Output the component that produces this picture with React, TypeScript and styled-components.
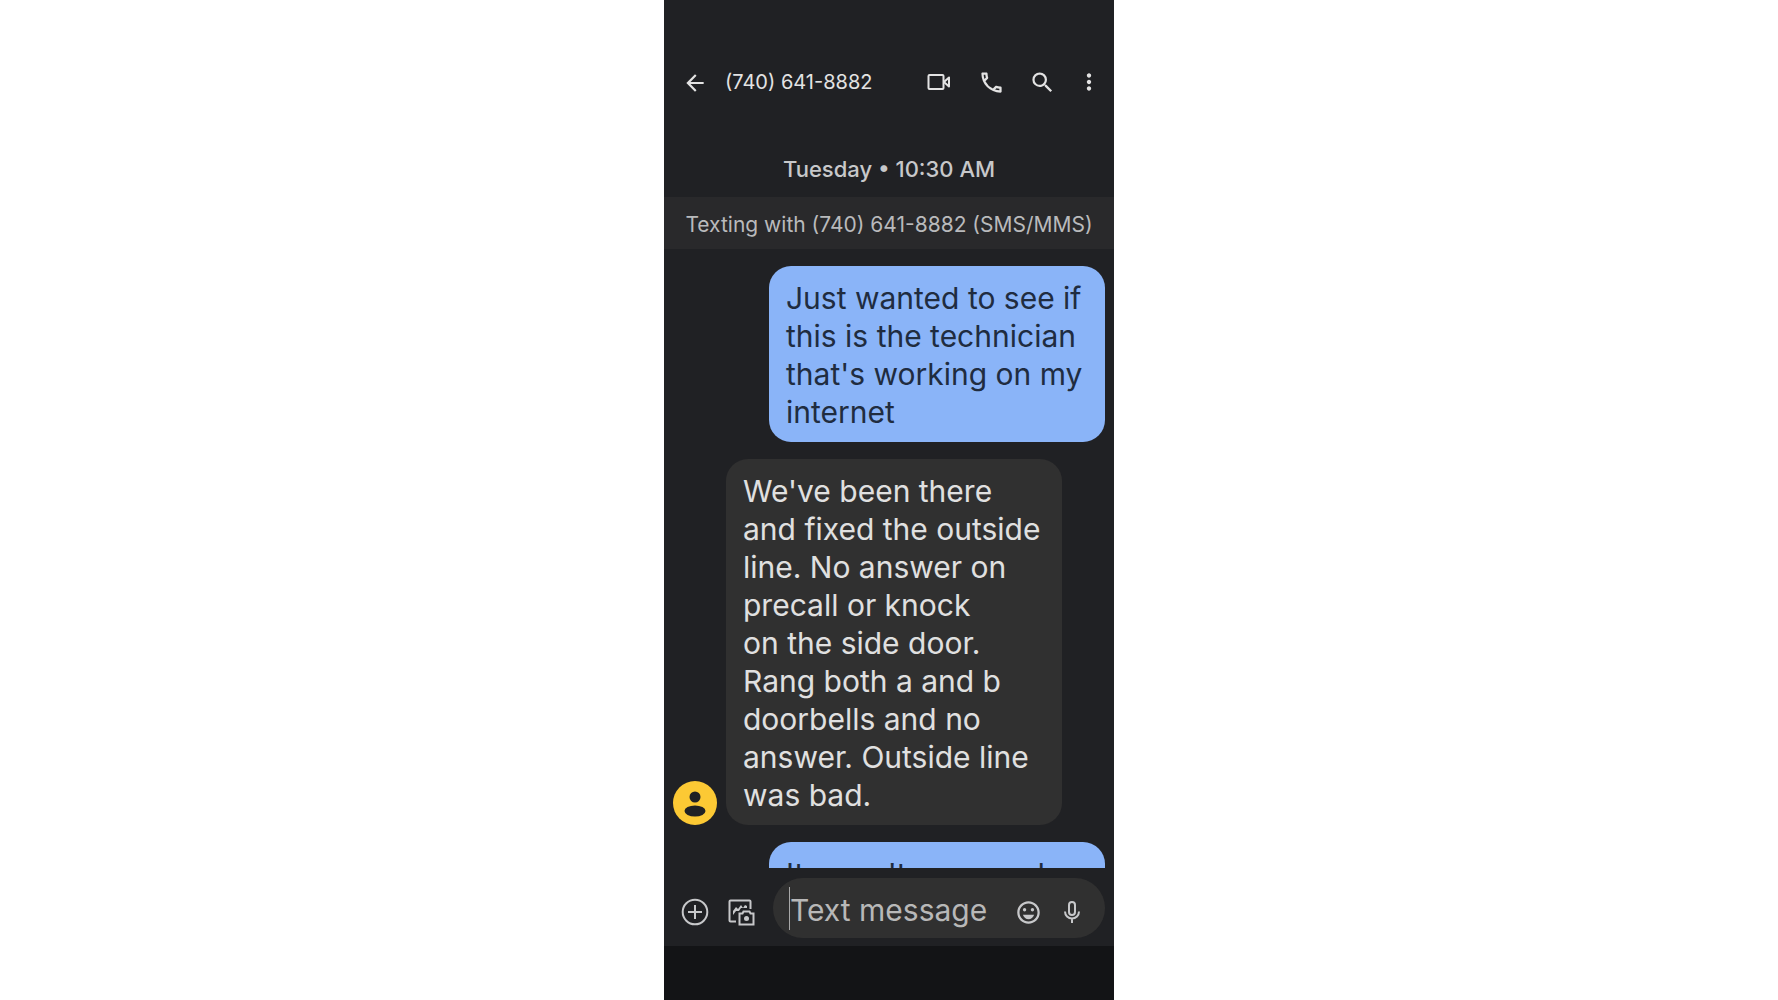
import React from "react";
import styled, { createGlobalStyle } from "styled-components";
import {
  MdArrowBack,
  MdMoreVert,
  MdOutlineCall,
  MdOutlineEmojiEmotions,
  MdSearch,
} from "react-icons/md";

const GlobalStyle = createGlobalStyle`
  * { box-sizing: border-box; }
  body {
    margin: 0;
    background: #ffffff;
    font-family: Inter, Roboto, "Liberation Sans", sans-serif;
  }
`;

const Phone = styled.main`
  display: flex;
  flex-direction: column;
  width: 100%;
  max-width: 450px;
  height: 100vh;
  margin: 0 auto;
  background: #202124;
  color: #e3e3e3;
`;

const Header = styled.header`
  display: flex;
  align-items: center;
  padding: 54px 12px 0 18px;
`;

const Title = styled.h1`
  flex: 1;
  margin: 0 0 0 19px;
  padding-top: 1px;
  font-size: 20px;
  line-height: 55px;
  font-weight: 400;
  white-space: nowrap;
`;

const IconButton = styled.button<{ $size?: number }>`
  display: grid;
  place-items: center;
  flex: none;
  width: ${({ $size = 24 }) => $size}px;
  height: ${({ $size = 24 }) => $size}px;
  padding: 0;
  border: 0;
  background: none;
  color: inherit;
  cursor: pointer;
`;

const ComposerButton = styled(IconButton)`
  height: 40px;
  padding-top: 8px;
`;

const Actions = styled.nav`
  display: flex;
  align-items: center;
  gap: 24px;

  & > :last-child {
    margin-left: -3px;
  }
`;

const DateLine = styled.time`
  padding: 43px 0 12px;
  font-size: 22px;
  line-height: 32px;
  font-weight: 500;
  text-align: center;
  color: #c7c8ca;
`;

const Banner = styled.p`
  margin: 0;
  padding-top: 3px;
  background: #29292b;
  color: #b9babc;
  font-size: 21px;
  line-height: 49px;
  text-align: center;
  white-space: nowrap;
`;

const Thread = styled.ol`
  display: flex;
  flex-direction: column;
  flex: 1;
  gap: 17px;
  min-height: 0;
  margin: 0;
  padding: 17px 9px 0;
  overflow: hidden;
  list-style: none;
`;

const Message = styled.li<{ $mine?: boolean }>`
  display: flex;
  flex: none;
  align-items: flex-end;
  justify-content: ${({ $mine }) => ($mine ? "flex-end" : "flex-start")};
  gap: 9px;
`;

const Bubble = styled.p<{ $mine?: boolean }>`
  width: 336px;
  margin: 0;
  padding: 13px 17px 11px;
  border-radius: 22px;
  background: ${({ $mine }) => ($mine ? "#8ab4f8" : "#303030")};
  color: ${({ $mine }) => ($mine ? "#202c40" : "#e0e0e0")};
  font-size: 30px;
  line-height: 38px;
  white-space: pre-line;
`;

const Avatar = styled.svg`
  flex: none;
  width: 44px;
  height: 44px;
`;

const Composer = styled.form`
  display: flex;
  align-items: center;
  gap: 14px;
  padding: 10px 9px 8px 15px;
  color: #c7c8ca;
`;

const Field = styled.div`
  display: flex;
  align-items: center;
  flex: 1;
  gap: 16px;
  min-width: 0;
  height: 60px;
  margin-left: 2px;
  padding: 0 19px 0 16px;
  border-radius: 30px;
  background: #303030;
`;

const Entry = styled.div`
  display: flex;
  align-items: center;
  flex: 1;
  min-width: 0;
`;

const Caret = styled.span`
  width: 1px;
  height: 43px;
  background: #a8a8a8;
`;

const TextInput = styled.input`
  flex: 1;
  width: 0;
  min-width: 0;
  height: 48px;
  padding: 4px 0 0;
  border: 0;
  outline: 0;
  background: none;
  color: #e0e0e0;
  font: inherit;
  font-size: 30px;

  &::placeholder {
    color: #b8b8b8;
    opacity: 1;
  }
`;

const NavigationArea = styled.footer`
  height: 54px;
  background: #131416;
`;

const VideoIcon = () => (
  <svg width="24" height="24" viewBox="0 0 24 24" fill="none" stroke="currentColor" strokeWidth="2" strokeLinejoin="round" aria-hidden="true">
    <rect x="1.500" y="5" width="15" height="14" rx="1" />
    <path d="M17.500 11.500 22 7.500v9l-4.500-4z" />
  </svg>
);

const PlusIcon = () => (
  <svg width="28" height="28" viewBox="0 0 28 28" fill="none" stroke="currentColor" strokeWidth="2" aria-hidden="true">
    <circle cx="14" cy="14" r="12.300" />
    <path d="M14 7v14M7 14h14" />
  </svg>
);

const GalleryIcon = () => (
  <svg width="28" height="28" viewBox="0 0 28 28" fill="none" stroke="currentColor" strokeWidth="2" aria-hidden="true">
    <path d="M9 23.500H3.500a1 1 0 0 1-1-1V3.500a1 1 0 0 1 1-1h19a1 1 0 0 1 1 1V11" />
    <path d="M6 17v-4l3-4 2 2 3-4 2 3 2-3 2 1v2h-6l-2 3H9l-3 4z" fill="currentColor" stroke="none" />
    <path d="M12.500 15.500h3l1-2h6l1 2h3v11h-14z" />
    <circle cx="19.500" cy="20.500" r="2.500" fill="currentColor" stroke="none" />
  </svg>
);

const MicIcon = () => (
  <svg width="28" height="28" viewBox="0 0 28 28" fill="none" stroke="currentColor" strokeWidth="2" aria-hidden="true">
    <rect x="11" y="4" width="6" height="13" rx="3" />
    <path d="M7 13.500a7 7 0 0 0 14 0M14 20.500V25" />
  </svg>
);

const PersonAvatar = () => (
  <Avatar viewBox="0 0 44 44" role="img" aria-label="Contact">
    <circle cx="22" cy="22" r="22" fill="#fcc934" />
    <circle cx="22" cy="16" r="5.500" fill="#202124" />
    <ellipse cx="22" cy="30" rx="10.500" ry="5.500" fill="#202124" />
  </Avatar>
);

const messages = [
  { mine: true, text: "Just wanted to see if\nthis is the technician\nthat's working on my\ninternet" },
  {
    mine: false,
    text: "We've been there\nand fixed the outside\nline. No answer on\nprecall or knock\non the side door.\nRang both a and b\ndoorbells and no\nanswer. Outside line\nwas bad.",
  },
  { mine: true, text: "It wasn't a second" },
];

export default function App() {
  return (
    <>
      <GlobalStyle />
      <Phone>
        <Header>
          <IconButton aria-label="Back"><MdArrowBack size={26} /></IconButton>
          <Title>(740) 641-8882</Title>
          <Actions aria-label="Conversation actions">
            <IconButton $size={28} aria-label="Video call"><VideoIcon /></IconButton>
            <IconButton $size={28} aria-label="Call"><MdOutlineCall size={27} /></IconButton>
            <IconButton $size={26} aria-label="Search"><MdSearch size={27} /></IconButton>
            <IconButton $size={26} aria-label="More options"><MdMoreVert size={26} /></IconButton>
          </Actions>
        </Header>
        <DateLine>Tuesday • 10:30 AM</DateLine>
        <Banner>Texting with (740) 641-8882 (SMS/MMS)</Banner>
        <Thread>
          {messages.map(({ mine, text }) => (
            <Message key={text} $mine={mine}>
              {!mine && <PersonAvatar />}
              <Bubble $mine={mine}>{text}</Bubble>
            </Message>
          ))}
        </Thread>
        <Composer onSubmit={(event) => event.preventDefault()}>
          <ComposerButton $size={32} type="button" aria-label="Add attachment"><PlusIcon /></ComposerButton>
          <ComposerButton $size={32} type="button" aria-label="Open gallery"><GalleryIcon /></ComposerButton>
          <Field>
            <Entry>
              <Caret />
              <TextInput aria-label="Text message" placeholder="Text message" />
            </Entry>
            <ComposerButton $size={28} type="button" aria-label="Insert emoji"><MdOutlineEmojiEmotions size={27} /></ComposerButton>
            <ComposerButton $size={28} type="button" aria-label="Record voice"><MicIcon /></ComposerButton>
          </Field>
        </Composer>
        <NavigationArea />
      </Phone>
    </>
  );
}
